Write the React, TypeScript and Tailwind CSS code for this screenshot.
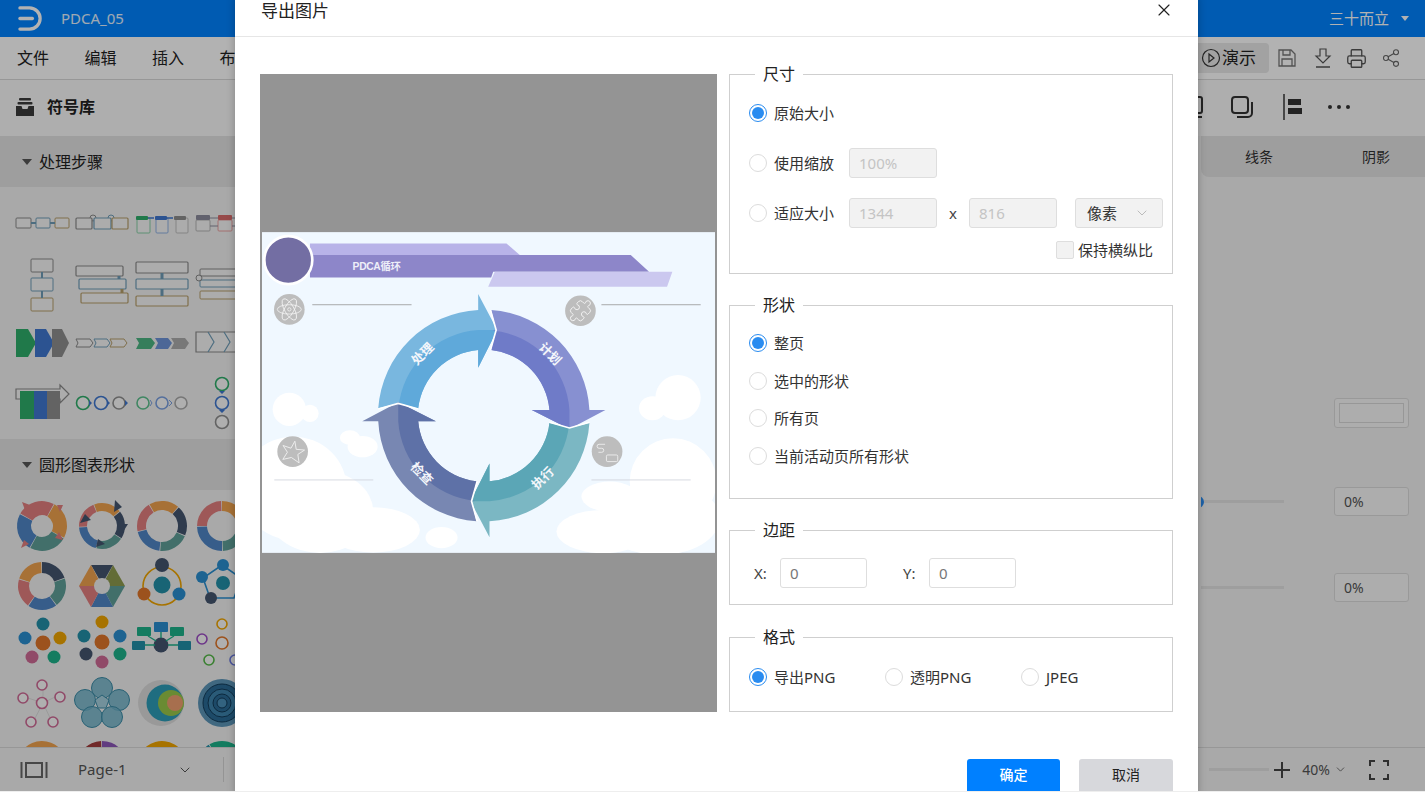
import { ChevronDown, Printer, Puzzle, Share2, X } from 'lucide-react';
import type { ReactNode } from 'react';

const FONT = "font-['Noto_Sans','Noto_Sans_CJK_SC',sans-serif]";

function polar(cx: number, cy: number, r: number, deg: number) {
  const a = ((deg - 90) * Math.PI) / 180;
  return [cx + r * Math.cos(a), cy + r * Math.sin(a)];
}

function Donut({
  colors,
  outer = 25,
  inner = 13,
  start = 0,
  cx = 30,
  cy = 30
}: {
  colors: string[];
  outer?: number;
  inner?: number;
  start?: number;
  cx?: number;
  cy?: number;
}) {
  const step = 360 / colors.length;
  return (
    <>
      {colors.map((color, i) => {
        const a = start + i * step;
        const b = a + step - 2;
        const [x1, y1] = polar(cx, cy, outer, a);
        const [x2, y2] = polar(cx, cy, outer, b);
        const [x3, y3] = polar(cx, cy, inner, b);
        const [x4, y4] = polar(cx, cy, inner, a);
        return (
          <path
            key={color + i}
            d={`M${x1} ${y1}A${outer} ${outer} 0 0 1 ${x2} ${y2}L${x3} ${y3}A${inner} ${inner} 0 0 0 ${x4} ${y4}Z`}
            fill={color}
          />
        );
      })}
    </>
  );
}

function Box({ x, y, w, h, c, sw = 1 }: { x: number; y: number; w: number; h: number; c: string; sw?: number }) {
  return <rect x={x} y={y} width={w} height={h} rx={1} fill="#f7f7f7" stroke={c} strokeWidth={sw} />;
}

function Dot({ x, y, r, c }: { x: number; y: number; r: number; c: string }) {
  return <circle cx={x} cy={y} r={r} fill={c} />;
}

function Ring({ x, y, r, c, sw = 1.6 }: { x: number; y: number; r: number; c: string; sw?: number }) {
  return <circle cx={x} cy={y} r={r} fill="#fbfbfb" stroke={c} strokeWidth={sw} />;
}

const GRAY = '#8a8a8a';
const STEEL = '#6f9db8';
const TAN = '#b79f6b';
const GREEN = '#2fae6a';
const BLUE = '#3f78d0';
const MID = '#8f8f8f';

const stepThumbs: ReactNode[] = [
  <>
    <Box x={4} y={25} w={15} h={10} c={GRAY} />
    <Box x={24} y={25} w={14} h={10} c={STEEL} />
    <Box x={43} y={25} w={14} h={10} c={TAN} />
    <path d="M19 30h5M38 30h5" stroke={STEEL} strokeWidth={2} />
  </>,
  <>
    <circle cx={21} cy={25} r={3} fill="none" stroke={GRAY} />
    <circle cx={39} cy={25} r={3} fill="none" stroke={STEEL} />
    <Box x={4} y={25} w={16} h={11} c={GRAY} sw={1.2} />
    <Box x={22} y={25} w={17} h={11} c={STEEL} sw={1.2} />
    <Box x={40} y={25} w={16} h={11} c={TAN} sw={1.2} />
  </>,
  <>
    <Box x={5} y={25} w={13} h={15} c="#86cfa5" />
    <Box x={24} y={25} w={12} h={15} c="#8fb0e2" />
    <Box x={44} y={25} w={12} h={15} c="#bdbdbd" />
    <rect x={4} y={23} width={12} height={4} rx={1} fill={GREEN} />
    <rect x={23} y={23} width={12} height={4} rx={1} fill={BLUE} />
    <rect x={42} y={23} width={12} height={4} rx={1} fill={MID} />
    <path d="M16 25h6M35 25h6" stroke={BLUE} strokeWidth={1.5} />
  </>,
  <>
    <Box x={4} y={27} w={14} h={11} c="#b5b5b5" />
    <Box x={26} y={27} w={14} h={11} c="#eaa0a0" />
    <rect x={4} y={22} width={14} height={5} rx={1} fill="#8c8c9c" />
    <rect x={26} y={22} width={14} height={5} rx={1} fill="#d96a6a" />
    <path d="M18 25h8M18 33h8M40 25h6M40 33h6" stroke="#8c8c9c" />
  </>,
  <>
    <Box x={19} y={6} w={22} h={13} c={GRAY} />
    <Box x={19} y={25} w={22} h={13} c={STEEL} />
    <Box x={19} y={45} w={22} h={13} c={TAN} />
    <path d="M30 19v6M30 38v7" stroke={STEEL} strokeWidth={2} />
  </>,
  <>
    <Box x={4} y={13} w={47} h={10} c={GRAY} sw={1.2} />
    <Box x={7} y={26} w={47} h={10} c={STEEL} sw={1.2} />
    <Box x={9} y={40} w={47} h={10} c={TAN} sw={1.2} />
    <path d="M47 23v3" stroke={STEEL} strokeWidth={3} />
    <path d="M50 36v4" stroke={TAN} strokeWidth={3} />
  </>,
  <>
    <Box x={4} y={9} w={52} h={11} c={GRAY} sw={1.2} />
    <Box x={4} y={26} w={52} h={10} c={STEEL} sw={1.2} />
    <Box x={4} y={43} w={52} h={10} c={TAN} sw={1.2} />
    <path d="M30 20v6M30 36v7" stroke={STEEL} strokeWidth={3} />
  </>,
  <>
    <Box x={8} y={16} w={50} h={7} c={GRAY} />
    <Box x={8} y={27} w={50} h={7} c={STEEL} />
    <Box x={8} y={38} w={50} h={8} c={TAN} />
    <circle cx={7} cy={25} r={3} fill="none" stroke={GRAY} />
  </>,
  <>
    <path d="M4 16h12l8 14-8 14H4z" fill={GREEN} />
    <path d="M23 16h11l8 14-8 14H23z" fill={BLUE} />
    <path d="M40 16h10l7 14-7 14H40z" fill={MID} />
  </>,
  <>
    <path d="M4 26h14l3 4-3 4H4l2-4z" fill="#f7f7f7" stroke={GRAY} />
    <path d="M22 26h13l3 4-3 4H22l2-4z" fill="#f7f7f7" stroke={STEEL} />
    <path d="M38 26h14l3 4-3 4H38l2-4z" fill="#f7f7f7" stroke={TAN} />
  </>,
  <>
    <path d="M4 25h15l4 5-4 6H4l3-6z" fill="#4cb583" />
    <path d="M23 25h13l4 5-4 6H23l3-6z" fill="#6d94d8" />
    <path d="M39 25h14l4 5-4 6H39l3-6z" fill="#adadad" />
  </>,
  <>
    <path d="M4 19h60v20H4z" fill="#f7f7f7" stroke={GRAY} strokeWidth={1.2} />
    <path d="M16 19l6 10-6 10M32 19l6 10-6 10M48 19l6 10-6 10" fill="none" stroke={STEEL} strokeWidth={1.2} />
  </>,
  <>
    <path d="M4 16h44v-4l9 9-9 9v-4H4z" fill="#f7f7f7" stroke={GRAY} strokeWidth={1.2} />
    <rect x={8} y={18} width={14} height={28} fill={GREEN} />
    <rect x={22} y={18} width={13} height={28} fill={BLUE} />
    <rect x={35} y={18} width={13} height={28} fill={MID} />
  </>,
  <>
    <Ring x={11} y={30} r={6.5} c={GREEN} />
    <Ring x={29} y={30} r={6.5} c={BLUE} />
    <Ring x={47} y={30} r={6} c={MID} />
    <path d="M17 27v6l3-3zM35 27v6l3-3zM53 27v6l3-3z" fill={BLUE} />
  </>,
  <>
    <Ring x={11} y={30} r={6} c="#5cc08d" />
    <Ring x={30} y={30} r={6} c="#7aa0e0" />
    <Ring x={49} y={30} r={6} c="#aaa" />
    <path d="M18 27l2 3-2 3M37 27l3 3-3 3" fill="none" stroke="#7aa0e0" />
  </>,
  <>
    <Ring x={30} y={11} r={6.5} c={GREEN} />
    <Ring x={30} y={30} r={6.5} c={BLUE} />
    <Ring x={30} y={49} r={6.5} c={MID} />
    <path d="M27 18h6l-3 3zM27 37h6l-3 3z" fill={BLUE} />
  </>
];

const R = '#e27f7f';
const O = '#f0a24e';
const T = '#5f9f98';
const B = '#4f86c6';
const N = '#44556f';
const TEAL = '#2390a8';
const ORANGE = '#e0762a';
const AMBER = '#f0a500';
const ROSE = '#cf6a96';
const EMER = '#1db28a';
const SKY = '#2a8fd0';

const circleThumbs: ReactNode[] = [
  <>
    <Donut colors={[O, T, B, R]} start={30} inner={11} />
    <path d="M45 9l6 0-3 7zM10 6l8 3-5 5zM51 44l-8-2 4-6zM9 52l3-8 5 4z" fill={R} />
  </>,
  <>
    <Donut colors={[O, N, T, B, R]} start={-20} outer={23} inner={15} />
    <path d="M43 4l7 7-8 5zM47 28h9l-5 8zM24 51l2-8 7 5zM8 27l5-9 6 6z" fill={N} />
  </>,
  <Donut colors={[O, N, T, B, R]} start={-30} outer={25} inner={16} />,
  <Donut colors={[O, T, B, R]} start={0} outer={25} inner={15} />,
  <Donut colors={[N, T, B, R, O]} start={0} outer={24} inner={13} />,
  <>
    <path d="M19 9h22L30 28z" fill={N} />
    <path d="M41 9l12 21H30z" fill="#8e9b4e" />
    <path d="M53 30L41 51 30 30z" fill={T} />
    <path d="M41 51H19l11-21z" fill={B} />
    <path d="M19 51L7 30h23z" fill={R} />
    <path d="M7 30L19 9l11 21z" fill={O} />
    <circle cx={30} cy={30} r={8} fill="#f1f1f1" />
  </>,
  <>
    <circle cx={30} cy={30} r={19} fill="none" stroke={AMBER} strokeWidth={1.6} />
    <Dot x={30} y={9} r={7} c={N} />
    <Dot x={30} y={29} r={8.5} c={TEAL} />
    <Dot x={12} y={38} r={6.5} c={ORANGE} />
    <Dot x={47} y={38} r={6.5} c={SKY} />
  </>,
  <>
    <path d="M30 9L49 22 42 42H18L11 22z" fill="none" stroke={SKY} strokeWidth={1.6} />
    <Dot x={31} y={9} r={6} c={SKY} />
    <Dot x={10} y={21} r={6} c={SKY} />
    <Dot x={31} y={27} r={7} c={TEAL} />
    <Dot x={19} y={42} r={6} c={N} />
    <Dot x={52} y={42} r={6} c={ROSE} />
  </>,
  <>
    <Dot x={31} y={8} r={6.5} c={TEAL} />
    <Dot x={13} y={22} r={6.5} c={SKY} />
    <Dot x={48} y={22} r={6.5} c={AMBER} />
    <Dot x={31} y={27} r={7.5} c={ORANGE} />
    <Dot x={20} y={41} r={6.5} c={ROSE} />
    <Dot x={42} y={41} r={6.5} c={EMER} />
  </>,
  <>
    <Dot x={30} y={6} r={6.5} c={AMBER} />
    <Dot x={12} y={20} r={6.5} c={TEAL} />
    <Dot x={48} y={20} r={6.5} c={SKY} />
    <Dot x={30} y={26} r={7.5} c={ORANGE} />
    <Dot x={14} y={38} r={6.5} c={N} />
    <Dot x={48} y={38} r={6.5} c={EMER} />
    <Dot x={30} y={46} r={6.5} c={ROSE} />
  </>,
  <>
    <rect x={22} y={6} width={14} height={10} rx={1} fill={SKY} />
    <rect x={5} y={11} width={14} height={9} rx={1} fill={EMER} />
    <rect x={38} y={11} width={14} height={9} rx={1} fill={EMER} />
    <rect x={0} y={25} width={13} height={9} rx={1} fill={TEAL} />
    <rect x={46} y={25} width={13} height={9} rx={1} fill={TEAL} />
    <Dot x={29} y={29} r={7.5} c={N} />
    <path d="M13 29h10M36 29h10M29 16v6M16 20l8 5M42 20l-8 5" stroke={EMER} strokeWidth={1.4} />
  </>,
  <>
    <Ring x={30} y={8} r={5} c={AMBER} />
    <Ring x={10} y={23} r={5} c="#9c4cc4" />
    <Ring x={50} y={23} r={5} c={EMER} />
    <Ring x={30} y={27} r={6} c={ORANGE} />
    <Ring x={17} y={44} r={5} c="#54b848" />
    <Ring x={43} y={44} r={5} c="#6a78dd" />
  </>,
  <>
    <path d="M31 27L31 12M31 27L13 21M31 27L45 20M31 27L21 46M31 27L40 46" stroke="#ddd" />
    <Ring x={30} y={9} r={5} c={ROSE} />
    <Ring x={11} y={22} r={5} c={ROSE} />
    <Ring x={48} y={21} r={5} c={ROSE} />
    <Ring x={30} y={27} r={5.5} c={ROSE} />
    <Ring x={19} y={46} r={5} c={ROSE} />
    <Ring x={41} y={46} r={5} c={ROSE} />
  </>,
  <>
    {[
      [30, 12],
      [13, 24],
      [47, 24],
      [20, 41],
      [40, 41]
    ].map(([x, y]) => (
      <circle key={x + '-' + y} cx={x} cy={y} r={10.5} fill="#6fb2c8" fillOpacity={0.85} stroke="#3a8ba6" />
    ))}
    <path d="M30 19l7 5-3 8h-8l-3-8z" fill="#a5d0de" stroke="#3a8ba6" />
  </>,
  <>
    <Dot x={29} y={27} r={23} c="#dcdcdc" />
    <Dot x={33} y={27} r={18.5} c="#2d9cb8" />
    <Dot x={39} y={27} r={13} c="#98c84a" />
    <Dot x={43} y={27} r={8} c="#f0a070" />
  </>,
  <>
    <Dot x={30} y={27} r={24} c="#5c95b8" />
    <circle cx={30} cy={27} r={19} fill="#2a6a96" stroke="#123c5a" />
    <circle cx={30} cy={27} r={14} fill="#3d83ad" stroke="#123c5a" />
    <circle cx={30} cy={27} r={9} fill="#2a6a96" stroke="#123c5a" />
    <circle cx={30} cy={27} r={5} fill="#4a8fb8" stroke="#123c5a" />
  </>,
  <Donut colors={[O, R]} cy={30} outer={25} inner={13} start={-90} />,
  <Donut colors={['#8b57b8', '#a23b3b']} cy={30} outer={25} inner={13} start={0} />,
  <Donut colors={[AMBER, ROSE]} cy={30} outer={25} inner={13} start={-60} />,
  <Donut colors={[EMER, TEAL]} cy={30} outer={25} inner={13} start={-30} />
];

function ThumbGrid({ items }: { items: ReactNode[] }) {
  return (
    <div className="grid grid-cols-[repeat(4,60px)] auto-rows-[60px] py-[6px] pl-3">
      {items.map((item, i) => (
        <svg key={i} viewBox="0 0 60 60" width={60} height={60} className="overflow-visible">
          {item}
        </svg>
      ))}
    </div>
  );
}

function SectionHeader({ title }: { title: string }) {
  return (
    <div className="flex h-[51px] items-center bg-[#e3e3e3] pl-[22px] text-base text-[#222]">
      <span className="mr-[7px] h-0 w-0 border-x-[5.5px] border-t-[6px] border-x-transparent border-t-[#555]" />
      {title}
    </div>
  );
}

function ValueBox({ children, className }: { children?: ReactNode; className?: string }) {
  return (
    <div
      className={`flex h-[29px] w-[75px] shrink-0 items-center rounded-[3px] border border-[#dcdcdc] bg-[#f8f8f8] pl-[9px] text-sm text-[#555] ${className ?? ''}`}
    >
      {children}
    </div>
  );
}

function LeftSide() {
  return (
    <aside className="w-[300px] shrink-0 overflow-hidden bg-[#f3f3f3]">
      <SectionHeader title="处理步骤" />
      <ThumbGrid items={stepThumbs} />
      <SectionHeader title="圆形图表形状" />
      <ThumbGrid items={circleThumbs} />
    </aside>
  );
}

function RightSide() {
  return (
    <aside className="flex w-[224px] shrink-0 flex-col overflow-hidden bg-[#f3f3f3]">
      <div className="flex h-[41px] shrink-0 items-center rounded-bl-lg bg-[#e3e3e3] text-sm text-[#333]">
        <span className="w-[116px] shrink-0 text-center">线条</span>
        <span className="w-[118px] shrink-0 text-center">阴影</span>
      </div>
      <div className="flex justify-end pr-4 pt-[221px]">
        <div className="flex h-[30px] w-[75px] items-center justify-center rounded-[3px] border border-[#dcdcdc] bg-[#f8f8f8]">
          <div className="h-[20px] w-[65px] border border-[#d8d8d8]" />
        </div>
      </div>
      <div className="mt-[59px] flex items-center pr-4">
        <span className="relative -ml-[9px] size-[12px] shrink-0 rounded-full border-[3px] border-[#2a8cf0] bg-white" />
        <div className="h-[3px] flex-1 bg-[#e3e3e3]" />
        <ValueBox className="ml-[50px]">0%</ValueBox>
      </div>
      <div className="mt-[57px] flex items-center pr-4">
        <div className="h-[3px] flex-1 bg-[#e3e3e3]" />
        <ValueBox className="ml-[50px]">0%</ValueBox>
      </div>
    </aside>
  );
}

function TopBars() {
  return (
    <>
      <header className="flex h-[37px] shrink-0 items-center bg-[#0083ff] text-white">
        <svg viewBox="0 0 26 26" width={25} height={25} className="ml-[18px]" fill="none" stroke="#fff" strokeWidth={3.4} strokeLinecap="round">
          <path d="M2 2h10a11 11 0 0 1 0 22H2" />
          <path d="M2 13h13" />
        </svg>
        <span className="ml-[18px] text-[15px] text-white/90">PDCA_05</span>
        <span className="ml-auto text-[15px]">三十而立</span>
        <span className="ml-[12px] mr-[16px] h-0 w-0 border-x-[4px] border-t-[5px] border-x-transparent border-t-white" />
      </header>
      <div className="flex h-[43px] shrink-0 items-center border-b border-[#d9d9d9] bg-white pl-[17px] text-[#222]">
        <div className="flex gap-[35.5px] text-base">
          <span>文件</span>
          <span>编辑</span>
          <span>插入</span>
          <span>布局</span>
        </div>
        <div className="ml-auto flex items-center pr-[24px]">
          <div className="flex h-[30px] w-[100px] items-center justify-end gap-[1px] rounded-[4px] bg-[#e8e8e8] pr-[13px] text-[17px]">
            <svg viewBox="0 0 20 20" width={20} height={20} fill="none" stroke="#333" strokeWidth={1.2}>
              <circle cx={10} cy={10} r={8.5} />
              <path d="M8 6l5 4-5 4z" />
            </svg>
            演示
          </div>
          <svg viewBox="0 0 20 20" width={20} height={20} fill="none" stroke="#777" strokeWidth={1.3} className="ml-[8px]">
            <path d="M2 2h12l4 4v12H2z" />
            <path d="M6 2v5h7V2M5 18v-7h10v7" />
          </svg>
          <svg viewBox="0 0 20 20" width={20} height={20} fill="none" stroke="#555" strokeWidth={1.2} className="ml-[16px]">
            <path d="M7 1h6v7h4l-7 7-7-7h4z" />
            <path d="M3 19h14" strokeWidth={1.5} />
          </svg>
          <Printer size={21} strokeWidth={1.5} className="ml-[13px] text-[#555]" />
          <Share2 size={20} strokeWidth={1.3} className="ml-[14px] text-[#666]" />
        </div>
      </div>
      <div className="flex h-[56px] shrink-0 items-center bg-[#fafafa] pb-[2px]">
        <svg viewBox="0 0 20 20" width={20} height={20} className="ml-[15px]" fill="#3a3a3a">
          <rect x={4} y={1} width={12} height={2.6} rx={1} />
          <rect x={2.5} y={5} width={15} height={2.6} rx={1} />
          <path d="M1 9h5.5l1 3h5l1-3H19v10H1z" />
        </svg>
        <span className="ml-[12px] text-base font-bold text-[#222]">符号库</span>
        <div className="ml-auto flex items-center pr-[75px]">
          <svg viewBox="0 0 20 22" width={20} height={22} fill="none" stroke="#333" strokeWidth={2}>
            <rect x={1} y={1} width={18} height={16} rx={2} />
            <path d="M1 21h18M10 17v4" />
          </svg>
          <svg viewBox="0 0 22 22" width={22} height={22} fill="none" stroke="#333" strokeWidth={2} className="ml-[28px]">
            <rect x={1} y={1} width={16} height={16} rx={3} />
            <path d="M6 21h11a4 4 0 0 0 4-4V6" />
          </svg>
          <svg viewBox="0 0 20 26" width={20} height={26} fill="#333" className="ml-[30px]">
            <rect x={0} y={0} width={2} height={26} fill="#666" />
            <rect x={5} y={5} width={13} height={6} />
            <rect x={5} y={14} width={14} height={6} />
          </svg>
          <div className="ml-[25px] flex gap-[5px]">
            <span className="size-[4px] rounded-full bg-[#333]" />
            <span className="size-[4px] rounded-full bg-[#333]" />
            <span className="size-[4px] rounded-full bg-[#333]" />
          </div>
        </div>
      </div>
    </>
  );
}

function BottomBar() {
  return (
    <footer className="flex h-[44px] shrink-0 items-center border-t border-[#d9d9d9] bg-[#f3f3f3] text-[#555]">
      <svg viewBox="0 0 28 16" width={28} height={16} className="ml-[20px]" fill="none" stroke="#666" strokeWidth={2}>
        <rect x={6} y={1} width={16} height={14} />
        <path d="M1.5 0v16M26.5 0v16" />
      </svg>
      <span className="ml-[30px] text-[15px]">Page-1</span>
      <ChevronDown size={16} strokeWidth={1.5} className="ml-[50px]" />
      <div className="ml-[30px] h-[25px] w-px bg-[#d5d5d5]" />
      <div className="ml-auto flex items-center pr-[36px]">
        <div className="h-[3px] w-[60px] bg-[#e3e3e3]" />
        <svg viewBox="0 0 16 16" width={16} height={16} className="ml-[5px]" stroke="#444" strokeWidth={2}>
          <path d="M8 0v16M0 8h16" />
        </svg>
        <span className="ml-[12px] text-sm">40%</span>
        <ChevronDown size={13} strokeWidth={1.5} className="ml-[4px]" />
        <svg viewBox="0 0 20 20" width={20} height={20} className="ml-[22px]" fill="none" stroke="#444" strokeWidth={2}>
          <path d="M1 6V1h5M14 1h5v5M19 14v5h-5M6 19H1v-5" />
        </svg>
      </div>
    </footer>
  );
}

const ARC_OUTER = 'M355 550A317 317 0 0 1 655 255L655 207L712 315L655 428L655 375A198 198 0 0 0 475 550L415 535Z';
const ARC_INNER = 'M416 546A257 257 0 0 1 655 315L712 315L655 428L655 375A198 198 0 0 0 475 550L415 535Z';

const arcs = [
  { rotate: 0, light: '#79b7df', dark: '#5fa9da' },
  { rotate: 90, light: '#8790d1', dark: '#6f7bc8' },
  { rotate: 180, light: '#7bb7c3', dark: '#5ba6b6' },
  { rotate: 270, light: '#7887b2', dark: '#5e71a7' }
];

const labels = [
  { text: '处理', x: 487, y: 385, r: -45 },
  { text: '计划', x: 872, y: 385, r: 45 },
  { text: '执行', x: 848, y: 758, r: -45 },
  { text: '检查', x: 487, y: 745, r: 45 }
];

const clouds = [
  [88, 553, 50, 50],
  [150, 565, 26, 26],
  [1255, 518, 68, 68],
  [1178, 550, 40, 36],
  [100, 790, 160, 155],
  [180, 860, 160, 124],
  [340, 915, 140, 68],
  [308, 665, 45, 32],
  [270, 638, 30, 22],
  [545, 938, 48, 32],
  [1240, 770, 130, 130],
  [1050, 815, 85, 45],
  [1030, 920, 140, 65],
  [1200, 880, 180, 110]
];

function Preview() {
  return (
    <svg viewBox="6 21 1360 963" className="h-[321px] w-[453px]" fontFamily="'Noto Sans','Noto Sans CJK SC',sans-serif">
      <rect x={6} y={21} width={1360} height={963} fill="#f0f8ff" />
      {clouds.map(([x, y, rx, ry]) => (
        <ellipse key={`${x}-${y}`} cx={x} cy={y} rx={rx} ry={ry} fill="#fff" />
      ))}
      <path d="M150 55H740L780 90H150z" fill="#b8b3e8" />
      <path d="M150 90H1113L1168 140H700L694 157H150z" fill="#8d86c9" />
      <path d="M705 140H1238L1222 185H685z" fill="#cbc8ef" />
      <circle cx={85} cy={105} r={72} fill="#736ea3" stroke="#fff" strokeWidth={8} />
      <text x={278} y={134} fontSize={31} fontWeight={700} fill="#eeeef8" fontFamily="'Liberation Sans','Noto Sans CJK SC',sans-serif" letterSpacing={-1}>
        PDCA循环
      </text>
      <path d="M157 239H455M1025 239H1323" stroke="#999" strokeWidth={2.5} />
      <path d="M43 765H340M995 765H1293" stroke="#cfd3dc" strokeWidth={2.5} />
      <g fill="#bdbdbd">
        <circle cx={88} cy={253} r={46} />
        <circle cx={962} cy={257} r={46} />
        <circle cx={98} cy={680} r={46} />
        <circle cx={1042} cy={680} r={46} />
      </g>
      <Puzzle x={926} y={221} width={72} height={72} color="#f2f2f2" strokeWidth={1} />
      <g fill="none" stroke="#f2f2f2" strokeWidth={2.5}>
        <ellipse cx={88} cy={253} rx={36} ry={14} />
        <ellipse cx={88} cy={253} rx={36} ry={14} transform="rotate(60 88 253)" />
        <ellipse cx={88} cy={253} rx={36} ry={14} transform="rotate(-60 88 253)" />
        <circle cx={88} cy={253} r={5} />
        <path d="M98 648l9 23 25-3-17 17 9 24-26-11-24 11 9-24-17-17 25 3z" transform="rotate(12 98 680)" />
        <path d="M1036 658h-18a6 6 0 0 0 0 12h8a6 6 0 0 1 0 12h-10" />
        <rect x={1040} y={690} width={34} height={20} rx={4} />
      </g>
      {arcs.map((arc) => (
        <g key={arc.rotate} transform={`rotate(${arc.rotate} 672 572)`}>
          <path d={ARC_OUTER} fill={arc.light} />
          <path d={ARC_INNER} fill={arc.dark} />
        </g>
      ))}
      {arcs.map((arc) => (
        <path
          key={arc.rotate}
          d="M355 552L415 535L475 552"
          fill="none"
          stroke="#fff"
          strokeWidth={5}
          transform={`rotate(${arc.rotate} 672 572)`}
        />
      ))}
      {labels.map((label) => (
        <text
          key={label.text}
          x={label.x}
          y={label.y}
          fontSize={38}
          fontWeight={700}
          fill="#f4f6fb"
          textAnchor="middle"
          dominantBaseline="central"
          transform={`rotate(${label.r} ${label.x} ${label.y})`}
        >
          {label.text}
        </text>
      ))}
    </svg>
  );
}

function Radio({ on, label }: { on?: boolean; label: string }) {
  return (
    <div className="flex items-center gap-[7px] whitespace-nowrap text-[15px] leading-[22px] text-[#333]">
      <span
        className={`flex size-[18px] items-center justify-center rounded-full border bg-white ${on ? 'border-[#2a8cf0]' : 'border-[#dcdcdc]'}`}
      >
        {on ? <span className="size-[12px] rounded-full bg-[#2a8cf0]" /> : null}
      </span>
      {label}
    </div>
  );
}

function Field({ title, h, children }: { title: string; h: string; children: ReactNode }) {
  return (
    <fieldset className={`border border-[#cfcfcf] ${h}`}>
      <legend className="ml-[25px] px-2 text-base leading-5 text-[#222]">{title}</legend>
      {children}
    </fieldset>
  );
}

function DisabledInput({ value }: { value: string }) {
  return (
    <div className="flex h-[30px] w-[88px] shrink-0 items-center rounded-[3px] border border-[#dedede] bg-[#f2f2f2] pl-[9px] text-[15px] text-[#c4c4c4]">
      {value}
    </div>
  );
}

function MarginInput() {
  return (
    <div className="flex h-[30px] w-[87px] items-center rounded-[3px] border border-[#dedede] bg-white pl-[9px] text-[15px] text-[#777]">
      0
    </div>
  );
}

function ExportDialog() {
  return (
    <div className="absolute -top-[4px] left-[235px] flex h-[800px] w-[963px] flex-col bg-white shadow-[0_0_8px_rgba(0,0,0,0.25)]">
      <div className="flex h-[41px] shrink-0 items-start justify-between border-b border-[#e6e6e6] pl-[26px] pr-[24px] pt-[3px]">
        <span className="text-[17px] leading-6 text-[#222]">导出图片</span>
        <X size={20} strokeWidth={1.4} className="mt-[1px] text-[#222]" />
      </div>
      <div className="flex gap-3 pl-[25px] pt-[27px]">
        <div className="mt-[10px] flex h-[638px] w-[457px] items-center justify-center bg-[#949494] pb-[2px]">
          <Preview />
        </div>
        <div className="flex w-[444px] flex-col">
          <Field title="尺寸" h="h-[210px]">
            <div className="flex flex-col gap-5 pl-[19px] pt-[14px]">
              <div className="flex h-[30px] items-center">
                <Radio on label="原始大小" />
              </div>
              <div className="flex h-[30px] items-center gap-[15px]">
                <Radio label="使用缩放" />
                <DisabledInput value="100%" />
              </div>
              <div className="flex h-[30px] items-center">
                <Radio label="适应大小" />
                <div className="ml-[15px]">
                  <DisabledInput value="1344" />
                </div>
                <span className="w-[32px] text-center text-[15px] text-[#444]">x</span>
                <DisabledInput value="816" />
                <div className="ml-[18px] flex h-[30px] w-[88px] shrink-0 items-center justify-between rounded-[3px] border border-[#dedede] bg-[#f2f2f2] pl-[11px] pr-[12px] text-[15px] text-[#333]">
                  像素
                  <ChevronDown size={16} strokeWidth={1.5} className="text-[#bbb]" />
                </div>
              </div>
            </div>
            <div className="mt-[11px] flex items-center justify-end gap-[4px] pr-[19px] text-[15px] text-[#333]">
              <span className="size-[18px] rounded-[2px] border border-[#dedede] bg-[#f2f2f2]" />
              保持横纵比
            </div>
          </Field>
          <Field title="形状" h="mt-[21px] h-[204px]">
            <div className="flex flex-col gap-[15.6px] pl-[19px] pt-[17px]">
              <Radio on label="整页" />
              <Radio label="选中的形状" />
              <Radio label="所有页" />
              <Radio label="当前活动页所有形状" />
            </div>
          </Field>
          <Field title="边距" h="mt-[21px] h-[85px]">
            <div className="flex items-center pl-[24px] pt-[18px] text-[15px] text-[#444]">
              <span className="w-[26px]">X:</span>
              <MarginInput />
              <span className="ml-[36px] w-[26px]">Y:</span>
              <MarginInput />
            </div>
          </Field>
          <Field title="格式" h="mt-[22px] h-[85px]">
            <div className="flex items-center pl-[19px] pt-[19px]">
              <div className="w-[136px]">
                <Radio on label="导出PNG" />
              </div>
              <div className="w-[136px]">
                <Radio label="透明PNG" />
              </div>
              <Radio label="JPEG" />
            </div>
          </Field>
        </div>
      </div>
      <div className="flex justify-end gap-[19px] pr-[25px] pt-[47px]">
        <div className="flex h-[40px] w-[93px] items-start justify-center rounded-[3px] bg-[#0080ff] pt-[6px] text-sm font-medium text-white">
          确定
        </div>
        <div className="flex h-[40px] w-[94px] items-start justify-center rounded-[3px] bg-[#d7d8dc] pt-[6px] text-sm text-[#222]">
          取消
        </div>
      </div>
    </div>
  );
}

export default function App() {
  return (
    <div className={`h-[792px] w-[1425px] overflow-hidden bg-[#eeeeee] ${FONT}`}>
      <div className="relative h-[791px] overflow-hidden">
        <div className="flex h-full flex-col">
          <TopBars />
          <div className="flex min-h-0 flex-1 overflow-hidden">
            <LeftSide />
            <main className="min-w-0 flex-1 bg-[#f3f3f3]" />
            <RightSide />
          </div>
          <BottomBar />
        </div>
        <div className="absolute inset-0 bg-black/30" />
        <ExportDialog />
      </div>
    </div>
  );
}
